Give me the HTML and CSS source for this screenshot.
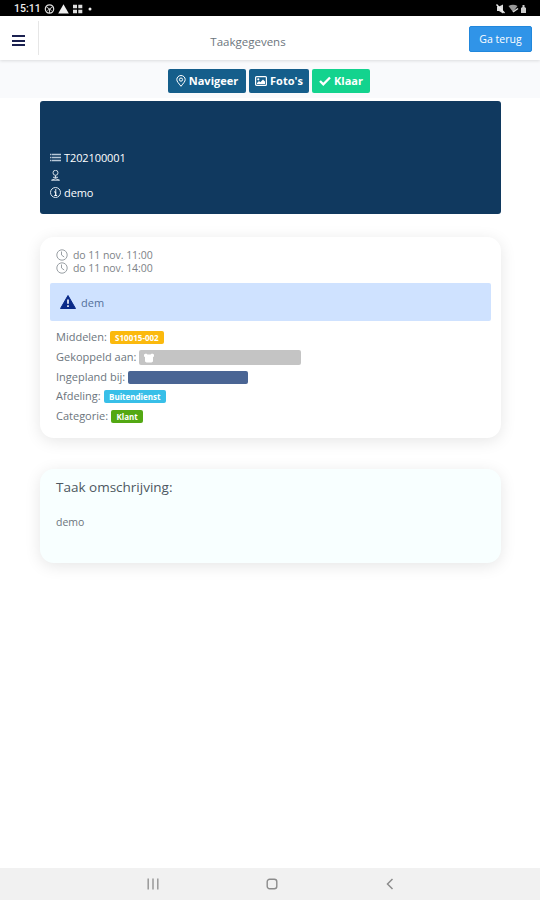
FILE: index.html
```html
<!DOCTYPE html>
<html lang="nl">
<head>
  <meta charset="UTF-8">
  <title>Taakgegevens</title>
  <link rel="stylesheet" href="styles.css">
</head>
<body>
  <div class="statusbar">
    <span class="time">15:11</span>
    <svg class="status-left" width="48" height="10" viewBox="0 0 48 10">
      <circle cx="5.500" cy="5" r="4.200" fill="none" stroke="#ddd" stroke-width="1.200"/>
      <path d="M2.500 3l3 2 3-2M5.500 5v4M3.500 6.500l2-1.500 2 1.500" fill="none" stroke="#ccc"/>
      <path d="M19.500 .3l5.300 9.200H14.200z" fill="#eee"/>
      <path d="M29 .7h4v3.600h-4zM34.300 .7h4v3.600h-4zM29 5.700h4v3.600h-4zM34.300 5.700h4v3.600h-4z" fill="#ddd"/>
      <circle cx="46" cy="5" r="1.500" fill="#eee"/>
    </svg>
    <svg class="status-right" width="32" height="10" viewBox="0 0 32 10">
      <path d="M1 2.500h2l4-2v9L3 7H1z" fill="#ddd"/>
      <path d="M.5 .5l8 8.500" stroke="#eee" stroke-width="1.300"/>
      <path d="M12.500 2q4.500-2.500 9 0L17 8z" fill="#999"/>
      <path d="M17 8l5-3.500" stroke="#ddd" stroke-width="1.500"/>
      <path d="M26.500 1h2v2l1.500 1v5h-5V4l1.500-1z" fill="#ccc"/>
    </svg>
  </div>

  <div class="header">
    <div class="menu">
      <span></span>
      <span></span>
      <span></span>
    </div>
    <div class="title">Taakgegevens</div>
    <a class="back" href="#">Ga terug</a>
  </div>

  <div class="toolbar">
    <a class="btn btn-nav" href="#">
      <svg width="10" height="12" viewBox="0 0 10 12" fill="none" stroke="#fff">
        <path d="M5 11.300C2.500 8 .8 6.500.8 4.600a4.200 4.100 0 0 1 8.400 0C9.200 6.500 7.500 8 5 11.300z"/>
        <circle cx="5" cy="4.600" r="1.600"/>
      </svg>
      <span>Navigeer</span>
    </a>
    <a class="btn btn-foto" href="#">
      <svg width="12" height="10" viewBox="0 0 12 10">
        <rect x=".6" y=".6" width="10.800" height="8.800" rx="1" fill="none" stroke="#fff" stroke-width="1.200"/>
        <circle cx="3.300" cy="3.300" r="1.100" fill="#fff"/>
        <path d="M2 8V7l2-2 1.300 1.200L8 3.500l2 2V8z" fill="#fff"/>
      </svg>
      <span>Foto's</span>
    </a>
    <a class="btn btn-klaar" href="#">
      <svg width="12" height="10" viewBox="0 0 12 10">
        <path d="M1 5l3.300 3.300L11 1.500" fill="none" stroke="#fff" stroke-width="2.300"/>
      </svg>
      <span>Klaar</span>
    </a>
  </div>

  <div class="banner">
    <div class="banner-row">
      <svg width="11" height="11" viewBox="0 0 11 11">
        <path d="M0 2.500h1.500M0 5.500h1.500M0 8.500h1.500M2 2.500H11M2 5.500H11M2 8.500H11" stroke="#b9c9d8" stroke-width="1.500"/>
      </svg>
      T202100001
    </div>
    <div class="banner-row">
      <svg width="11" height="11" viewBox="0 0 11 11" fill="none" stroke="#d3dde6">
        <circle cx="5.500" cy="2.800" r="2.500"/>
        <path d="M5.500 5.300v3M3 7.300h5M1.500 10.200q4-3 8 0z"/>
      </svg>
    </div>
    <div class="banner-row">
      <svg width="11" height="11" viewBox="0 0 11 11">
        <circle cx="5.500" cy="5.500" r="5" fill="none" stroke="#dfe7ee"/>
        <path d="M4.300 4.800h1.400v3.500M4.300 8.500h2.800M5.700 2.200v1.500" fill="none" stroke="#fff" stroke-width="1.200"/>
      </svg>
      demo
    </div>
  </div>

  <div class="card">
    <div class="date">
      <svg width="12" height="12" viewBox="0 0 12 12" fill="none" stroke="#999fa4">
        <circle cx="6" cy="6" r="5.200"/>
        <path d="M5.500 2.500V6l2.700 2"/>
      </svg>
      do 11 nov. 11:00
    </div>
    <div class="date">
      <svg width="12" height="12" viewBox="0 0 12 12" fill="none" stroke="#999fa4">
        <circle cx="6" cy="6" r="5.200"/>
        <path d="M5.500 2.500V6l2.700 2"/>
      </svg>
      do 11 nov. 14:00
    </div>
    <div class="alert">
      <svg width="16" height="14" viewBox="0 0 16 14">
        <path d="M8 .5l7.500 13H.5z" fill="#0a2a88" stroke="#0a2a88" stroke-linejoin="round"/>
        <path d="M8 4.500v4.300M8 10.300v1.700" stroke="#fff" stroke-width="1.600"/>
      </svg>
      dem
    </div>
    <div class="props">
      <div class="prop">Middelen: <span class="badge yellow">S10015-002</span></div>
      <div class="prop">Gekoppeld aan:
        <span class="bar grey">
          <svg width="10" height="10" viewBox="0 0 10 10">
            <path d="M0 1.500l2-1 1.500 1h3L8 .5l2 1v2L9 4v4.500L7.500 9.500h-5L1 8.500V4L0 3.500z" fill="#fff"/>
          </svg>
        </span>
      </div>
      <div class="prop">Ingepland bij: <span class="bar blue"></span></div>
      <div class="prop">Afdeling: <span class="badge cyan">Buitendienst</span></div>
      <div class="prop">Categorie: <span class="badge green">Klant</span></div>
    </div>
  </div>

  <div class="card description">
    <h2>Taak omschrijving:</h2>
    <p>demo</p>
  </div>

  <div class="navbar">
    <svg width="12" height="12" viewBox="0 0 12 12">
      <path d="M1.200 .5v11M6 .5v11M10.800 .5v11" stroke="#999" stroke-width="1.500"/>
    </svg>
    <svg width="12" height="12" viewBox="0 0 12 12">
      <rect x="1.200" y="1.200" width="9.600" height="9.600" rx="2.500" fill="none" stroke="#8c8c8c" stroke-width="1.400"/>
    </svg>
    <svg width="12" height="12" viewBox="0 0 12 12">
      <path d="M8.500 1L3.500 6l5 5" fill="none" stroke="#8c8c8c" stroke-width="1.500"/>
    </svg>
  </div>
</body>
</html>
```
FILE: styles.css
```css
* {
  box-sizing: border-box;
}
html, body {
  height: 100%;
  margin: 0;
  padding: 0;
}
body {
  display: flex;
  flex-direction: column;
  background: #fff;
  color: #6c757d;
  font-family: "Open Sans", sans-serif;
  font-size: 11px;
  overflow: hidden;
}
a {
  color: #fff;
  text-decoration: none;
}
svg {
  display: block;
  flex: none;
}

/* status bar */
.statusbar {
  height: 16px;
  flex: none;
  display: flex;
  align-items: center;
  padding: 1px 14px 0;
  background: #000;
  color: #eee;
}
.time {
  width: 30px;
  font-family: Roboto, sans-serif;
  font-size: 10.5px;
  font-weight: 500;
}
.status-right {
  margin-left: auto;
  margin-right: -2px;
}

/* header */
.header {
  height: 44px;
  flex: none;
  display: flex;
  align-items: center;
  padding-right: 8px;
  background: #fff;
  box-shadow: 0 1px 3px rgba(0, 0, 0, 0.12);
  z-index: 1;
}
.menu {
  width: 39px;
  height: 34px;
  display: flex;
  flex-direction: column;
  justify-content: center;
  gap: 2.5px;
  padding: 5px 13px 0 12px;
  border-right: 1px solid #e6e6e6;
}
.menu span {
  height: 2px;
  background: #1b2150;
}
.title {
  flex: 1;
  padding: 7px 12px 0 0;
  text-align: center;
  font-size: 11.5px;
}
.back {
  width: 63px;
  height: 26px;
  margin-top: 1px;
  border: 1px solid #2187dc;
  border-radius: 2px;
  background: #3094e8;
  line-height: 24px;
  text-align: center;
  font-size: 10.5px;
}

/* buttons */
.toolbar {
  height: 38px;
  flex: none;
  display: flex;
  justify-content: center;
  gap: 3px;
  padding: 9px 2px 0 0;
  background: #f9fafc;
}
.btn {
  height: 24px;
  display: flex;
  align-items: center;
  justify-content: center;
  gap: 3px;
  border-radius: 2px;
  background: #155e8b;
  font-weight: bold;
  font-size: 11px;
}
.btn span {
  padding-bottom: 2px;
}
.btn-nav {
  width: 78px;
}
.btn-foto {
  width: 60px;
}
.btn-klaar {
  width: 58px;
  background: #13d38e;
}

.banner {
  height: 113px;
  flex: none;
  margin: 3px 39px 0 40px;
  padding: 48px 10px 0;
  border-radius: 3px;
  background: #10395f;
  color: #fff;
}
.banner-row {
  height: 17.5px;
  display: flex;
  align-items: center;
  gap: 3px;
  letter-spacing: -0.1px;
}

/* cards */
.card {
  height: 201px;
  flex: none;
  margin: 23px 39px 0 40px;
  padding: 12px 10px 0;
  border-radius: 14px;
  background: #fff;
  box-shadow: 0 3px 16px rgba(0, 0, 0, 0.1);
}
.date {
  height: 12.5px;
  display: flex;
  align-items: center;
  gap: 5px;
  padding-left: 6px;
  color: #7d8287;
  font-size: 10.5px;
  line-height: 12px;
  letter-spacing: -0.05px;
}
.alert {
  height: 38px;
  display: flex;
  align-items: center;
  gap: 5px;
  margin-top: 9px;
  padding-left: 10px;
  border-radius: 2px;
  background: #cfe2ff;
  color: #54709b;
}
.props {
  padding: 6px 6px 0;
}
.prop {
  height: 19.7px;
  display: flex;
  align-items: center;
  gap: 3px;
}
.badge {
  height: 13px;
  padding: 0 5px;
  border-radius: 2px;
  color: #fff;
  font-size: 8px;
  font-weight: bold;
  line-height: 13px;
  text-align: center;
  margin-top: 2px;
}
.yellow {
  width: 54px;
  padding: 0;
  background: #fbb90d;
}
.cyan {
  width: 62px;
  background: #38bfe8;
}
.green {
  width: 32px;
  background: #53a813;
}
.bar {
  display: flex;
  align-items: center;
  margin-top: 2px;
  border-radius: 2px;
}
.grey {
  width: 162px;
  height: 15px;
  padding-left: 5px;
  background: #c4c4c4;
}
.blue {
  width: 120px;
  height: 13px;
  background: #4a6594;
}

.description {
  height: 94px;
  margin-top: 31px;
  padding: 9px 16px 0;
  background: #f8ffff;
}
.description h2 {
  margin: 0;
  color: #4d5861;
  font-size: 13.5px;
  font-weight: normal;
  line-height: 18px;
}
.description p {
  margin: 19px 0 0;
  font-size: 10.5px;
  line-height: 15px;
}

/* android navigation */
.navbar {
  height: 32px;
  flex: none;
  display: flex;
  justify-content: space-between;
  align-items: center;
  margin-top: auto;
  padding: 0 144px 0 147px;
  background: #f1f1f1;
}
```
